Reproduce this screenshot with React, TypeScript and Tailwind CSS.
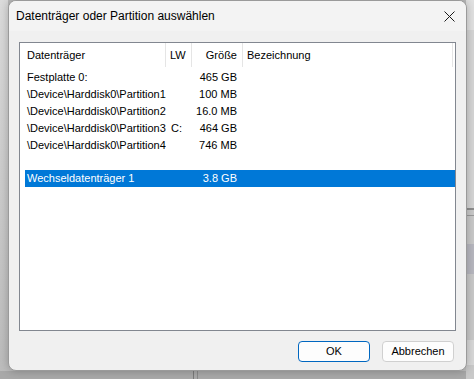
import React from 'react';

type Row = { name: string; lw?: string; size: string };

const rows: Row[] = [
  { name: 'Festplatte 0:', size: '465 GB' },
  { name: '\\Device\\Harddisk0\\Partition1', size: '100 MB' },
  { name: '\\Device\\Harddisk0\\Partition2', size: '16.0 MB' },
  { name: '\\Device\\Harddisk0\\Partition3', lw: 'C:', size: '464 GB' },
  { name: '\\Device\\Harddisk0\\Partition4', size: '746 MB' },
];

const font = { fontFamily: '"Liberation Sans", Arial, sans-serif' };

function ListRow({ row, selected }: { row: Row; selected?: boolean }) {
  return (
    <div
      className={
        'flex h-[17px] items-center text-[11px] leading-none ' +
        (selected ? 'bg-[#0078d7] text-white' : 'text-black')
      }
    >
      <div className="w-[141px] shrink-0 pl-[2px] whitespace-nowrap overflow-hidden">{row.name}</div>
      <div className="w-[26px] shrink-0 pl-[5px]">{row.lw ?? ''}</div>
      <div className="w-[51px] shrink-0 pr-[6px] text-right whitespace-nowrap">{row.size}</div>
      <div className="flex-1" />
    </div>
  );
}

export default function App() {
  return (
    <div className="relative w-[474px] h-[379px] overflow-hidden bg-[#bdbdbd]" style={font}>
      {/* background behind the dialog */}
      <div className="absolute left-0 top-0 w-[8px] h-[379px] bg-gradient-to-b from-[#dcdcdc] to-[#bcbcbc]" />
      <div className="absolute left-0 top-[371px] w-[474px] h-[8px] bg-[#a9a9a9]" />
      <div className="absolute left-[193px] top-[371px] w-[1px] h-[8px] bg-[#7a7a7a]" />
      <div className="absolute left-[197px] top-[371px] w-[1px] h-[8px] bg-[#8a8a8a]" />
      <div className="absolute left-[466px] top-0 w-[8px] h-[379px] bg-[#c9c9c9]" />
      <div className="absolute left-[466px] top-0 w-[8px] h-[30px] bg-[#e2e2e2]" />
      <div className="absolute left-[466px] top-[30px] w-[8px] h-[178px] bg-[#d6d6d6]" />
      <div className="absolute left-[466px] top-[208px] w-[8px] h-[2px] bg-[#8e8e8e]" />
      <div className="absolute left-[466px] top-[215px] w-[8px] h-[1px] bg-[#9a9a9a]" />
      <div className="absolute left-[466px] top-[244px] w-[8px] h-[30px] bg-[#b8b8c0]" />
      <div className="absolute left-[466px] top-[340px] w-[8px] h-[25px] bg-[#d9d9d9]" />

      {/* dialog */}
      <div className="absolute left-[8px] top-0 w-[459px] h-[371px] rounded-[8px] border border-[#9a9a9a] bg-[#f0f0f0] flex flex-col overflow-hidden shadow-[0_0_10px_rgba(0,0,0,0.25)]">
        {/* title bar */}
        <div className="h-[30px] shrink-0 bg-[#f3f3f3] flex items-center pl-[7px] pr-[8px]">
          <span className="text-[12px] text-black leading-none">Datenträger oder Partition auswählen</span>
          <div className="flex-1" />
          <svg width="11" height="11" viewBox="0 0 11 11" className="mr-[3px]">
            <path d="M0.5 0.5 L10.5 10.5 M10.5 0.5 L0.5 10.5" stroke="#1a1a1a" strokeWidth="1" />
          </svg>
        </div>

        {/* list box */}
        <div className="ml-[10px] mt-[11px] w-[437px] h-[289px] border border-[#828790] bg-white flex flex-col">
          {/* header */}
          <div className="h-[24px] shrink-0 flex items-center text-[11px] text-black leading-none">
            <div className="w-[146px] h-full shrink-0 flex items-center pl-[7px] border-r border-[#e5e5e5]">Datenträger</div>
            <div className="w-[26px] h-full shrink-0 flex items-center pl-[4px] border-r border-[#e5e5e5]">LW</div>
            <div className="w-[51px] h-full shrink-0 flex items-center justify-end pr-[5px] border-r border-[#e5e5e5]">Größe</div>
            <div className="w-[210px] h-full shrink-0 flex items-center pl-[4px] border-r border-[#e5e5e5]">Bezeichnung</div>
          </div>
          <div className="pl-[5px] pt-[2px] flex flex-col">
            {rows.map((r) => (
              <ListRow key={r.name} row={r} />
            ))}
            <div className="h-[16px]" />
            <ListRow row={{ name: 'Wechseldatenträger 1', size: '3.8 GB' }} selected />
          </div>
        </div>

        {/* buttons */}
        <div className="flex justify-end gap-[12px] mt-[10px] pr-[12px]">
          <button className="w-[72px] h-[21px] rounded-[4px] border border-[#0067c0] bg-[#fdfdfd] text-[11px] text-black leading-none">
            OK
          </button>
          <button className="w-[72px] h-[21px] rounded-[4px] border border-[#d0d0d0] bg-[#fdfdfd] text-[11px] text-black leading-none">
            Abbrechen
          </button>
        </div>
      </div>
    </div>
  );
}
